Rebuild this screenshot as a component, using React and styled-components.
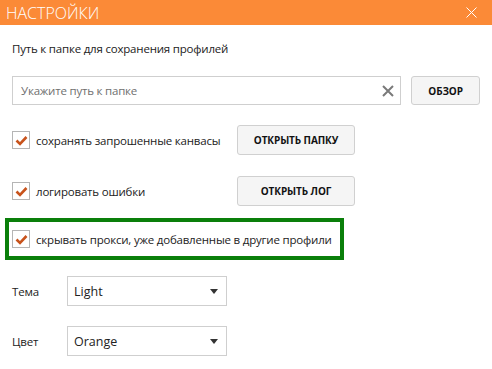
import React from 'react'
import styled, { createGlobalStyle } from 'styled-components'

const Global = createGlobalStyle`
  html, body { margin: 0; padding: 0; background: #fff; }
  body {
    font-family: "Open Sans", "Noto Sans", sans-serif;
    font-size: 11.5px;
    letter-spacing: -0.2px;
    color: #222;
  }
`

const Window = styled.div`
  width: 492px;
  height: 369px;
  background: #fff;
  display: flex;
  flex-direction: column;
`

const Header = styled.div`
  height: 25px;
  background: #fb8a37;
  display: flex;
  align-items: center;
  justify-content: space-between;
  padding: 0 15px 0 6px;
`

const Title = styled.span`
  color: #fff;
  font-size: 16px;
  font-weight: 300;
  letter-spacing: 0;
`

const Body = styled.div`
  display: flex;
  flex-direction: column;
  padding: 0 12px;
`

const Label = styled.div`
  margin-top: 16px;
  line-height: 16px;
`

const PathRow = styled.div`
  display: flex;
  align-items: center;
  gap: 10px;
  margin-top: 19px;
`

const InputBox = styled.div`
  width: 390px;
  height: 29px;
  box-sizing: border-box;
  border: 1px solid #cfcfcf;
  display: flex;
  align-items: center;
  padding: 0 6px 0 8px;
  justify-content: space-between;
  color: #6f6f6f;
`

const Button = styled.button`
  width: ${p => p.$w}px;
  height: ${p => p.$h}px;
  box-sizing: border-box;
  border: 1px solid #d0d0d0;
  border-radius: 3px;
  background: #f5f5f5;
  font-family: "Open Sans", "Noto Sans", sans-serif;
  font-size: 10px;
  font-weight: 700;
  letter-spacing: -0.1px;
  color: #111;
  padding: 0;
`

const CheckRow = styled.div`
  display: flex;
  align-items: center;
  height: 30px;
  margin-top: ${p => p.$mt}px;
`

const CheckLabel = styled.label`
  display: flex;
  align-items: center;
  gap: 6px;
  width: 225px;
  white-space: nowrap;
`

const Box = styled.span`
  width: 18px;
  height: 18px;
  box-sizing: border-box;
  border: 1px solid #b5b5b5;
  background: #fff;
  display: flex;
  align-items: center;
  justify-content: center;
  flex: none;
`

const Highlight = styled.div`
  margin: 12px 0 0 -7px;
  width: 339px;
  height: 42px;
  box-sizing: border-box;
  border: 4px solid #0a7f0a;
  display: flex;
  align-items: center;
  padding-left: 3px;
  gap: 6px;
  white-space: nowrap;
`

const SelectRow = styled.div`
  display: flex;
  align-items: center;
  margin-top: ${p => p.$mt}px;
`

const SelectLabel = styled.span`
  width: 55px;
`

const Select = styled.div`
  width: 160px;
  height: 30px;
  box-sizing: border-box;
  border: 1px solid #cfcfcf;
  display: flex;
  align-items: center;
  justify-content: space-between;
  padding: 0 8px 0 6px;
  font-size: 12.5px;
  letter-spacing: 0;
  color: #222;
`

const Check = () => (
  <Box>
    <svg width="13" height="11" viewBox="0 0 13 11">
      <path d="M1.5 5.5 L5 9 L11.5 2" fill="none" stroke="#c8531c" strokeWidth="2.6" />
    </svg>
  </Box>
)

const Arrow = () => (
  <svg width="8" height="5" viewBox="0 0 8 5">
    <path d="M0 0 H8 L4 5 Z" fill="#333" />
  </svg>
)

export default function App() {
  return (
    <Window>
      <Global />
      <Header>
        <Title>НАСТРОЙКИ</Title>
        <svg width="11" height="11" viewBox="0 0 11 11">
          <path d="M0.5 0.5 L10.5 10.5 M10.5 0.5 L0.5 10.5" stroke="#fff" strokeWidth="1" />
        </svg>
      </Header>
      <Body>
        <Label>Путь к папке для сохранения профилей</Label>
        <PathRow>
          <InputBox>
            <span>Укажите путь к папке</span>
            <svg width="12" height="12" viewBox="0 0 12 12">
              <path d="M1 1 L11 11 M11 1 L1 11" stroke="#7a7a7a" strokeWidth="2" />
            </svg>
          </InputBox>
          <Button $w={69} $h={29}>ОБЗОР</Button>
        </PathRow>
        <CheckRow $mt={20}>
          <CheckLabel><Check />сохранять запрошенные канвасы</CheckLabel>
          <Button $w={118} $h={30}>ОТКРЫТЬ ПАПКУ</Button>
        </CheckRow>
        <CheckRow $mt={21}>
          <CheckLabel><Check />логировать ошибки</CheckLabel>
          <Button $w={118} $h={30}>ОТКРЫТЬ ЛОГ</Button>
        </CheckRow>
        <Highlight>
          <Check />скрывать прокси, уже добавленные в другие профили
        </Highlight>
        <SelectRow $mt={16}>
          <SelectLabel>Тема</SelectLabel>
          <Select>Light<Arrow /></Select>
        </SelectRow>
        <SelectRow $mt={20}>
          <SelectLabel>Цвет</SelectLabel>
          <Select>Orange<Arrow /></Select>
        </SelectRow>
      </Body>
    </Window>
  )
}
